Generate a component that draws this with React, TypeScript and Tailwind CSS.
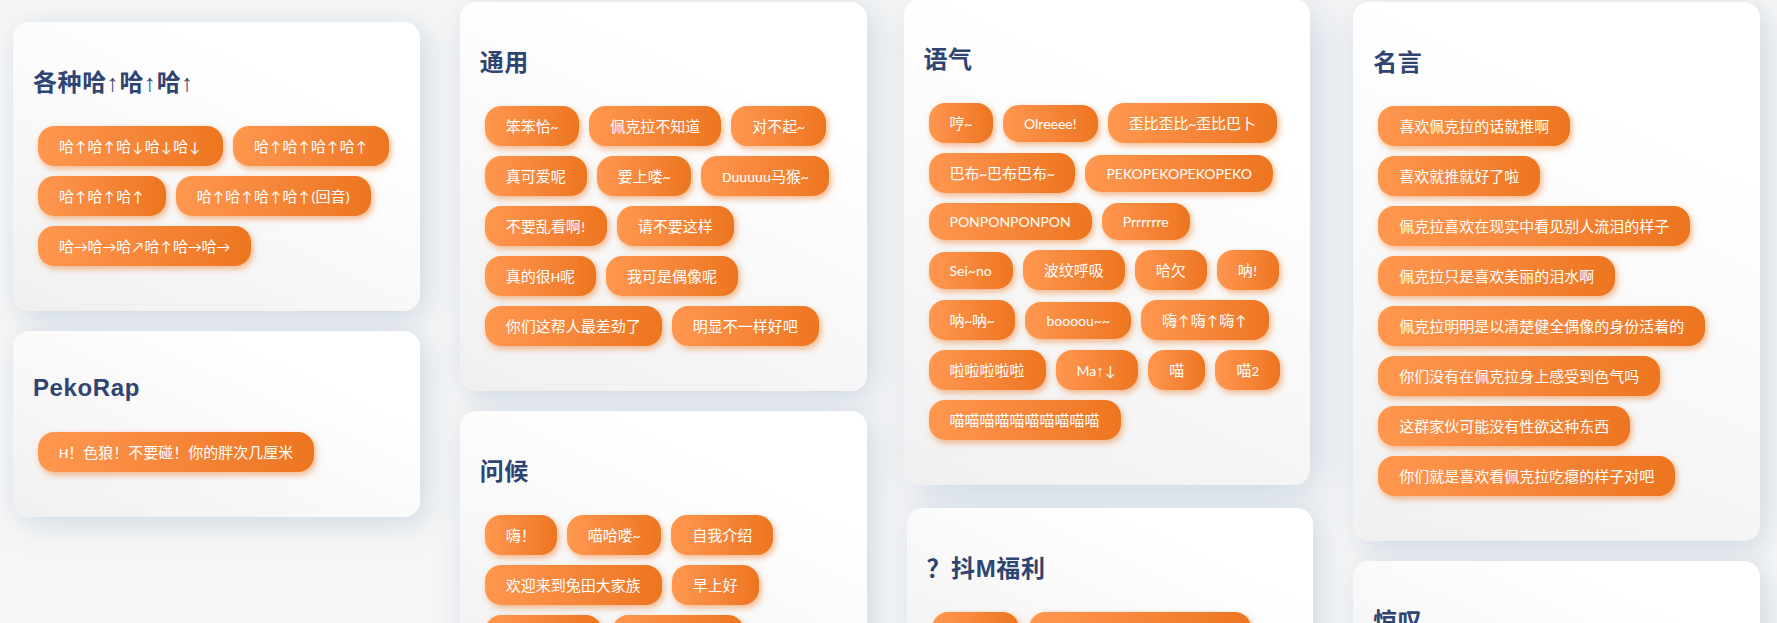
import { Fragment } from "react";
import { clsx } from "clsx";

type Group = { title: string; rows: string[][]; raised?: boolean };

const columns: Group[][] = [
  [
    {
      title: "各种哈↑哈↑哈↑",
      rows: [
        ["哈↑哈↑哈↓哈↓哈↓", "哈↑哈↑哈↑哈↑"],
        ["哈↑哈↑哈↑", "哈↑哈↑哈↑哈↑(回音)"],
        ["哈→哈→哈↗哈↑哈→哈→"],
      ],
    },
    { title: "PekoRap", rows: [["H！色狼！不要碰！你的胖次几厘米"]] },
  ],
  [
    {
      title: "通用",
      rows: [
        ["笨笨恰~", "佩克拉不知道", "对不起~"],
        ["真可爱呢", "要上喽~", "Duuuuu马猴~"],
        ["不要乱看啊!", "请不要这样"],
        ["真的很H呢", "我可是偶像呢"],
        ["你们这帮人最差劲了", "明显不一样好吧"],
      ],
    },
    {
      title: "问候",
      rows: [
        ["嗨！", "喵哈喽~", "自我介绍"],
        ["欢迎来到兔田大家族", "早上好"],
        ["大家晚上好", "大家早上好呀"],
      ],
    },
  ],
  [
    {
      title: "语气",
      raised: true,
      rows: [
        ["哼~", "Olreeee!", "歪比歪比~歪比巴卜"],
        ["巴布~巴布巴布~", "PEKOPEKOPEKOPEKO"],
        ["PONPONPONPON", "Prrrrrre"],
        ["Sei~no", "波纹呼吸", "哈欠", "呐!"],
        ["呐~呐~", "boooou~~", "嗨↑嗨↑嗨↑"],
        ["啦啦啦啦啦", "Ma↑↓", "喵", "喵2"],
        ["喵喵喵喵喵喵喵喵喵喵"],
      ],
    },
    { title: "？抖M福利", rows: [["再来点", "请再多骂我几句吧拜托你了"]] },
  ],
  [
    {
      title: "名言",
      rows: [
        ["喜欢佩克拉的话就推啊"],
        ["喜欢就推就好了啦"],
        ["佩克拉喜欢在现实中看见别人流泪的样子"],
        ["佩克拉只是喜欢美丽的泪水啊"],
        ["佩克拉明明是以清楚健全偶像的身份活着的"],
        ["你们没有在佩克拉身上感受到色气吗"],
        ["这群家伙可能没有性欲这种东西"],
        ["你们就是喜欢看佩克拉吃瘪的样子对吧"],
      ],
    },
    { title: "惊叹", rows: [["诶？", "什么！"]] },
  ],
];

const isLatin = (text: string) => /^[\x20-\x7e]+$/.test(text);

function Label({ text }: { text: string }) {
  if (!/^[A-Za-z]+↑/.test(text)) return <>{text}</>;
  const [head, tail] = text.split("↑");
  return (
    <>
      <span className="text-[14px] leading-none font-[Lato,sans-serif]">{head}</span>
      <span className="leading-none font-bold font-['Liberation_Sans',sans-serif]">↑</span>
      {tail}
    </>
  );
}

function Title({ text }: { text: string }) {
  return (
    <>
      {text.split("↑").map((part, i) => (
        <Fragment key={i}>
          {i > 0 && (
            <span className="leading-none font-normal font-['Liberation_Sans',sans-serif]">↑</span>
          )}
          {part}
        </Fragment>
      ))}
    </>
  );
}

function VoiceButton({ text }: { text: string }) {
  return (
    <button
      type="button"
      className={clsx(
        "cursor-pointer whitespace-nowrap rounded-2xl bg-linear-to-r from-[#ff974f] to-[#ed751e] px-[21px] text-white shadow-[2px_3px_6px_rgba(237,117,30,0.5)]",
        isLatin(text)
          ? "py-[9px] font-[Lato,sans-serif] text-[14px] leading-[19px]"
          : "pt-2.5 pb-2 font-[Carlito,'Noto_Sans_CJK_SC',sans-serif] text-[15px] leading-[22px]",
      )}
    >
      <Label text={text} />
    </button>
  );
}

function Card({ title, rows, raised }: Group) {
  return (
    <section
      className={clsx(
        "relative rounded-2xl bg-[linear-gradient(25deg,#f0f0f0,#ffffff_75%)] px-5 pb-[45px]",
        isLatin(title) ? "pt-[41px]" : "pt-[43px]",
        raised
          ? "-translate-x-[3px] -translate-y-[3px] shadow-[10px_10px_40px_rgba(150,175,205,0.42)]"
          : "shadow-[6px_6px_30px_rgba(155,180,205,0.45)]",
      )}
    >
      <h2
        className={clsx(
          "text-2xl font-bold tracking-wide text-[#2f4470] font-['Liberation_Sans','Noto_Sans_CJK_SC',sans-serif]",
          isLatin(title) ? "mb-7 leading-8" : "mb-[26px] leading-[35px]",
        )}
      >
        <Title text={title} />
      </h2>
      <div className="flex flex-col gap-2.5 px-[5px]">
        {rows.map((row, i) => (
          <div key={i} className="flex items-baseline gap-2.5">
            {row.map((text) => (
              <VoiceButton key={text} text={text} />
            ))}
          </div>
        ))}
      </div>
    </section>
  );
}

export default function App() {
  return (
    <main className="min-h-screen bg-[#f6f6f6] pb-5">
      <div className="grid grid-cols-4 gap-10 pt-0.5 pr-[17px] pl-[13px]">
        {columns.map((groups, i) => (
          <div key={i} className={clsx("flex flex-col gap-5", i === 0 && "pt-5")}>
            {groups.map((group) => (
              <Card key={group.title} {...group} />
            ))}
          </div>
        ))}
      </div>
    </main>
  );
}
